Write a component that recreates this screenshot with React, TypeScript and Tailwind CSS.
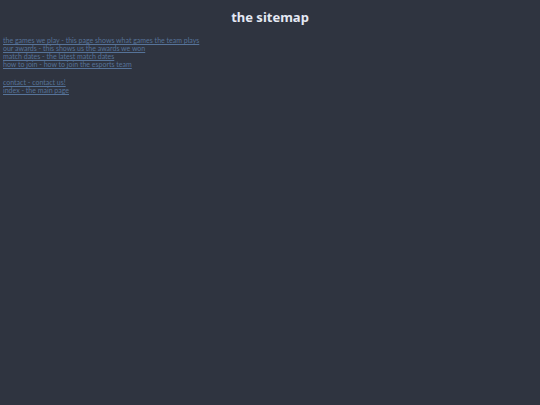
const groups = [
  [
    { href: "#games", text: "the games we play - this page shows what games the team plays" },
    { href: "#awards", text: "our awards - this shows us the awards we won" },
    { href: "#matches", text: "match dates - the latest match dates" },
    { href: "#join", text: "how to join - how to join the esports team" },
  ],
  [
    { href: "#contact", text: "contact - contact us!" },
    { href: "#index", text: "index - the main page" },
  ],
];

export default function App() {
  return (
    <div className="min-h-screen bg-[#2f3440] px-[3px] pt-[7px] font-[Lato,sans-serif] text-[#e5e9f4]">
      <h1 className="text-center font-['Noto_Sans',sans-serif] text-[13px] leading-5 font-bold">the sitemap</h1>
      <nav className="mt-[9px] flex flex-col gap-[10px] text-[7px] leading-[8px] text-[#567399]">
        {groups.map((links, i) => (
          <ul key={i}>
            {links.map((link) => (
              <li key={link.href}>
                <a href={link.href} className="underline">{link.text}</a>
              </li>
            ))}
          </ul>
        ))}
      </nav>
    </div>
  );
}
